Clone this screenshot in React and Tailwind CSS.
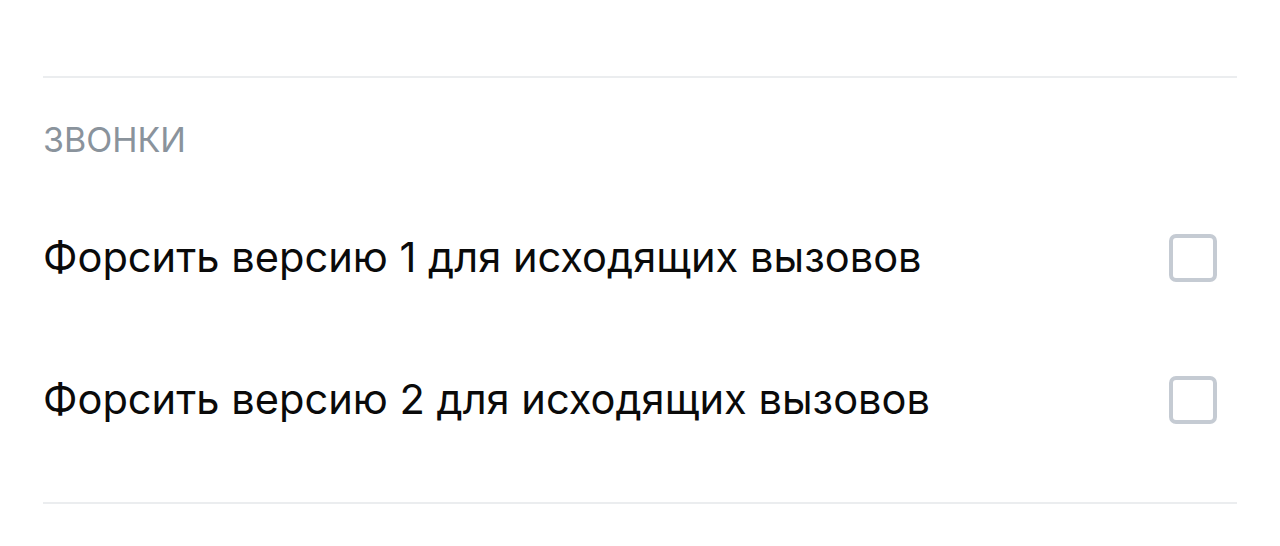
import React from 'react';

const rows = [
  'Форсить версию 1 для исходящих вызовов',
  'Форсить версию 2 для исходящих вызовов',
];

export default function App() {
  return (
    <div className="min-h-[546px] w-full bg-white px-[43px] pt-[76px]" style={{ fontFamily: 'Inter, "Noto Sans", sans-serif' }}>
      <div className="border-t-2 border-[#ebedef]">
        <div className="flex h-[109px] items-center pt-[15px] text-[34px] leading-none text-[#8a939c]">ЗВОНКИ</div>
        {rows.map((t) => (
          <div key={t} className="flex h-[142px] items-center justify-between">
            <span className="text-[41.6px] leading-none text-[#0a0a0a]">{t}</span>
            <span className="mr-[20px] box-border h-[48px] w-[48px] rounded-[7px] border-4 border-[#c5cbd3]" />
          </div>
        ))}
        <div className="mt-[31px] border-t-2 border-[#ebedef]" />
      </div>
    </div>
  );
}
